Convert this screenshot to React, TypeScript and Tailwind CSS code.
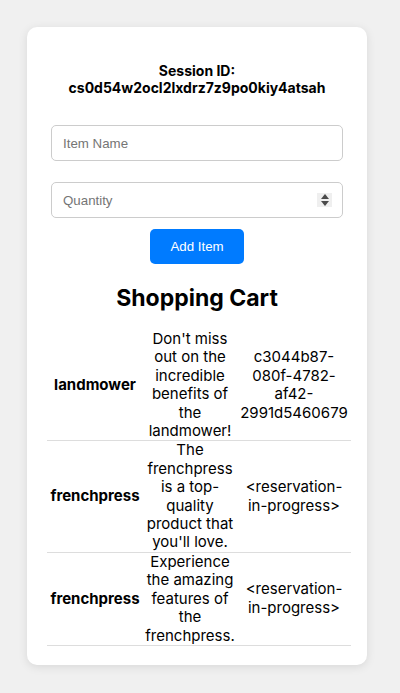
import React from 'react';

type CartItem = {
  name: string;
  description: string;
  reservation: string;
};

const items: CartItem[] = [
  {
    name: 'landmower',
    description: "Don't miss out on the incredible benefits of the landmower!",
    reservation: 'c3044b87-080f-4782-af42-2991d5460679',
  },
  {
    name: 'frenchpress',
    description: "The frenchpress is a top-quality product that you'll love.",
    reservation: '<reservation-in-progress>',
  },
  {
    name: 'frenchpress',
    description: 'Experience the amazing features of the frenchpress.',
    reservation: '<reservation-in-progress>',
  },
];

const SpinIcon = () => (
  <div className="absolute right-[11px] top-[11px] flex h-[14px] w-[15px] flex-col items-center justify-center gap-[2px] bg-[#efefef]">
    <svg width="8" height="5" viewBox="0 0 8 5">
      <path d="M0 5 L4 0 L8 5 Z" fill="#4a4a4a" />
    </svg>
    <svg width="8" height="5" viewBox="0 0 8 5">
      <path d="M0 0 L8 0 L4 5 Z" fill="#4a4a4a" />
    </svg>
  </div>
);

export default function App() {
  return (
    <div className="min-h-[693px] bg-[#f0f0f0] pt-[27px] pl-[27px] font-['Inter',sans-serif] text-black">
      <div className="w-[340px] rounded-[10px] bg-white px-[24px] pt-[35px] pb-[19px] shadow-[0_2px_10px_rgba(0,0,0,0.1)]">
        {/* Session header */}
        <div className="text-center text-[14px] font-bold leading-[17px]">
          <div>Session ID:</div>
          <div>cs0d54w2ocl2lxdrz7z9po0kiy4atsah</div>
        </div>

        {/* Form */}
        <div className="mt-[29px] flex flex-col items-center">
          <input
            placeholder="Item Name"
            className="h-[36px] w-full rounded-[5px] border border-[#cccccc] px-[11px] font-['Liberation_Sans',Arial,sans-serif] text-[13.3px] placeholder:text-[#757575] outline-none"
          />
          <div className="relative mt-[21px] w-full">
            <input
              placeholder="Quantity"
              className="h-[36px] w-full rounded-[5px] border border-[#cccccc] px-[11px] font-['Liberation_Sans',Arial,sans-serif] text-[13.3px] placeholder:text-[#757575] outline-none"
            />
            <SpinIcon />
          </div>
          <button className="mt-[11px] h-[35px] w-[94px] rounded-[5px] bg-[#007bff] font-['Liberation_Sans',Arial,sans-serif] text-[13.3px] text-white">
            Add Item
          </button>
        </div>

        {/* Cart */}
        <h2 className="mt-[21px] text-center text-[23px] font-bold leading-[27px]">Shopping Cart</h2>

        <table className="mt-[18px] -ml-[4px] w-[304px] table-fixed border-collapse text-[15px] leading-[18.4px]">
          <colgroup>
            <col className="w-[96px]" />
            <col className="w-[94px]" />
            <col className="w-[114px]" />
          </colgroup>
          <tbody>
            {items.map((item, i) => (
              <tr key={i} className="border-b border-[#dddddd]">
                <td className="p-0 text-center align-middle font-bold">{item.name}</td>
                <td className="p-0 text-center align-middle">{item.description}</td>
                <td className="p-0 text-center align-middle break-words">{item.reservation}</td>
              </tr>
            ))}
          </tbody>
        </table>
      </div>
    </div>
  );
}
